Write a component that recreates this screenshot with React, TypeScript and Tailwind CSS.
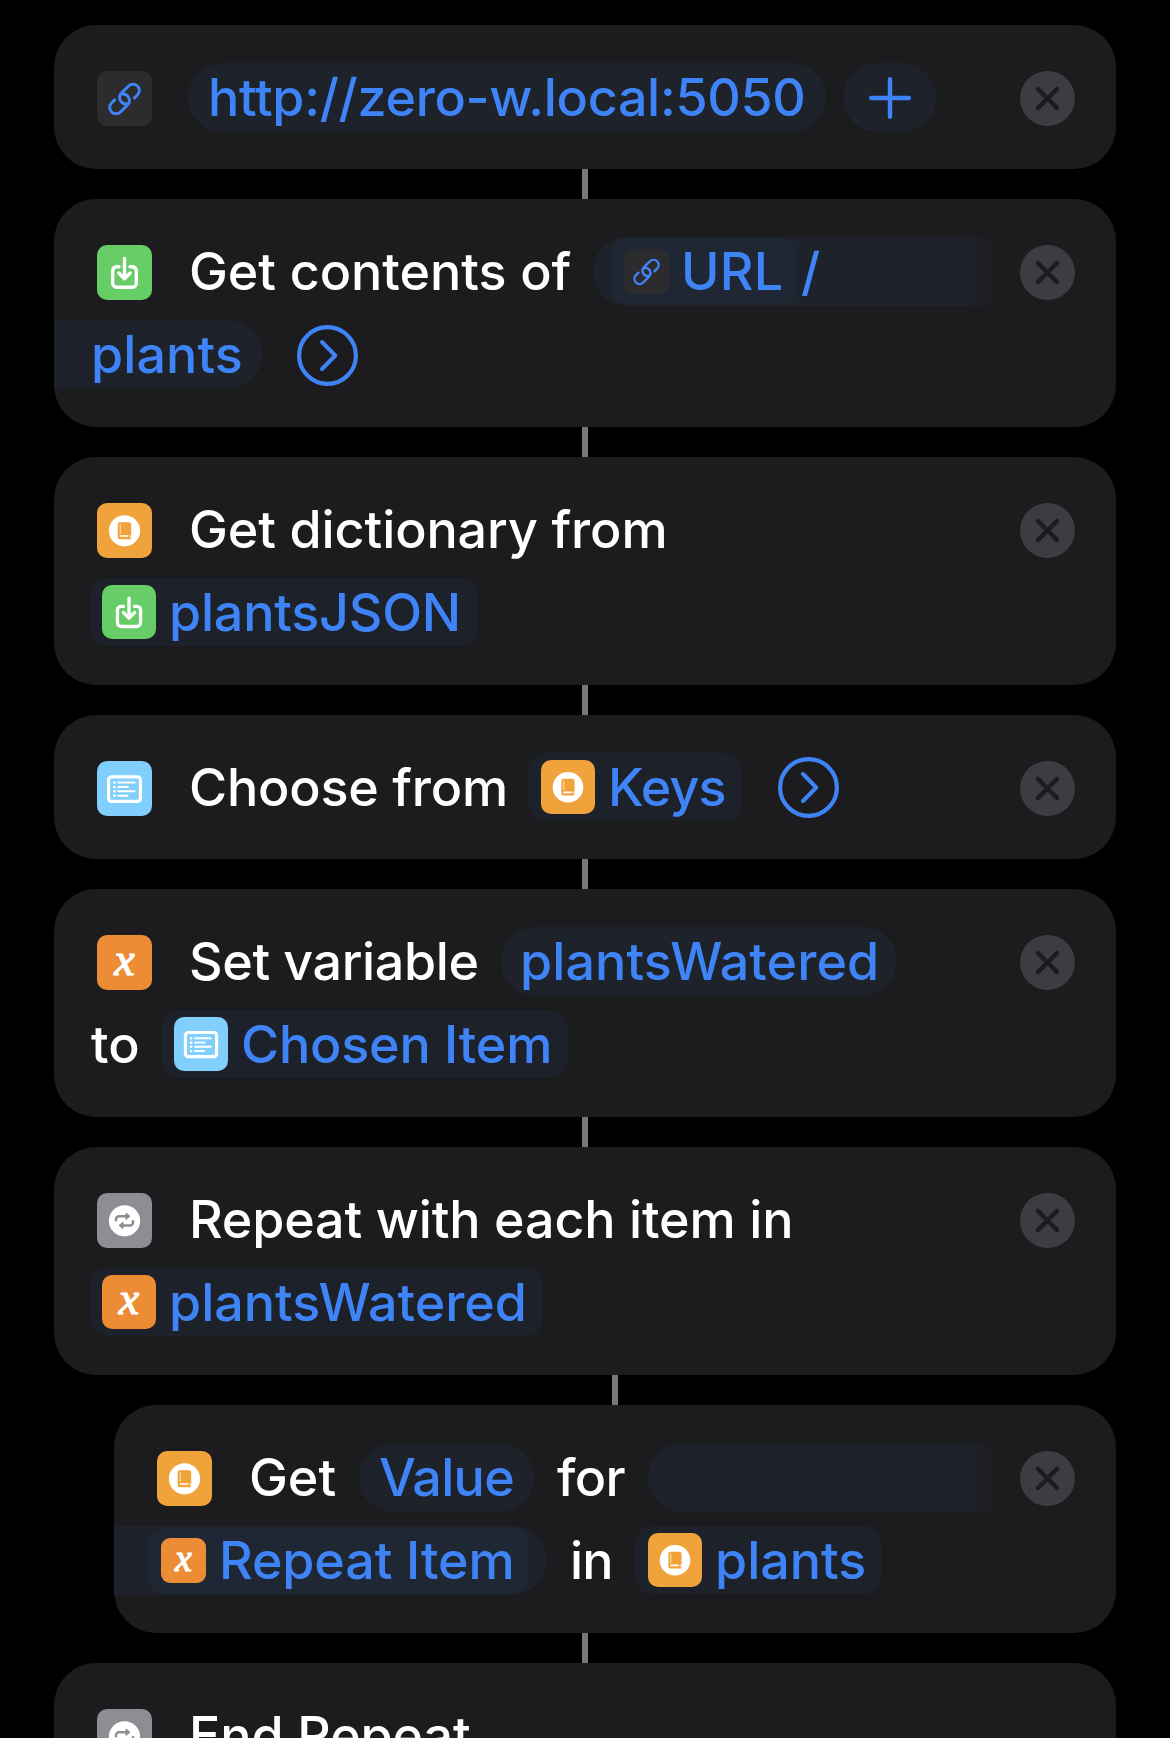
import type { ReactNode } from "react";

type IconProps = { className?: string };

function Tile({ className = "", children }: { className?: string; children: ReactNode }) {
  return <span className={`flex shrink-0 ${className}`}>{children}</span>;
}

function LinkIcon({ className = "size-[55px] rounded-[10px]" }: IconProps) {
  return (
    <Tile className={`bg-[#2c2c2e] ${className}`}>
      <svg viewBox="0 0 55 55" className="size-full" fill="none" stroke="#3f84f7" strokeWidth="2.9" strokeLinecap="butt">
        <g transform="translate(27.5 28) rotate(-45)">
          <path d="M-6.5 -6.3H-12A6.3 6.3 0 0 0 -12 6.3H-2A6.3 6.3 0 0 0 1 -5.5" />
          <path d="M6.5 6.3H12A6.3 6.3 0 0 0 12 -6.3H2A6.3 6.3 0 0 0 -1 5.5" />
        </g>
      </svg>
    </Tile>
  );
}

function DownloadIcon({ className = "size-[55px]" }: IconProps) {
  return (
    <Tile className={`rounded-[10px] bg-[#67ce67] ${className}`}>
      <svg viewBox="0 0 55 55" className="size-full" fill="none" stroke="#fff" strokeWidth="3.4" strokeLinecap="round" strokeLinejoin="round">
        <path d="M22 21.7H19.5A4 4 0 0 0 15.7 25.7V38.3A4 4 0 0 0 19.7 42.3H35.3A4 4 0 0 0 39.3 38.3V25.7A4 4 0 0 0 35.5 21.7H33" />
        <path d="M27.5 13.5V33M21.8 28L27.5 33.7L33.2 28" />
      </svg>
    </Tile>
  );
}

function DictionaryIcon({ className = "size-[55px]" }: IconProps) {
  return (
    <Tile className={`rounded-[10px] bg-[#f0a33b] ${className}`}>
      <svg viewBox="0 0 55 55" className="size-full">
        <circle cx="27.5" cy="27.8" r="15.6" fill="#fff" />
        <path d="M23 19.2H32A2.3 2.3 0 0 1 34.2 21.5V33.5L33.4 34V35.2H34.2V36.2H23A2.3 2.3 0 0 1 20.7 33.9V21.5A2.3 2.3 0 0 1 23 19.2Z" fill="#f0a33b" />
        <path d="M23.2 20.8V30.6" stroke="#fff" strokeWidth="0.7" />
        <path d="M22.8 33H31.2M32.4 33H33.4" stroke="#fff" strokeWidth="1.7" />
      </svg>
    </Tile>
  );
}

function ListIcon({ className = "size-[55px]" }: IconProps) {
  return (
    <Tile className={`rounded-[10px] bg-[#80cffd] ${className}`}>
      <svg viewBox="0 0 55 55" className="size-full" fill="none" stroke="#fff" strokeLinecap="round">
        <rect x="11.6" y="15.8" width="31.8" height="24.6" rx="3" strokeWidth="3.2" />
        <path d="M21.3 21.6H37.5M21.3 26.1H31M21.3 30.3H37.5M21.3 34.7H30.5" strokeWidth="2" />
        <path d="M17.4 21.6h.1M17.4 26.1h.1M17.4 30.3h.1M17.4 34.7h.1" strokeWidth="2.7" />
      </svg>
    </Tile>
  );
}

function VariableIcon({ className = "size-[55px] text-[46px] rounded-[10px]" }: IconProps) {
  return (
    <Tile className={`items-center justify-center bg-[#ec8d36] font-['Liberation_Serif',serif] font-normal italic text-white [-webkit-text-stroke:1.2px_white] ${className}`}>
      <span className="-mt-[10%] leading-none">x</span>
    </Tile>
  );
}

function RepeatIcon() {
  return (
    <Tile className="size-[55px] rounded-[10px] bg-[#8e8d93]">
      <svg viewBox="0 0 55 55" className="size-full">
        <circle cx="27.5" cy="27.8" r="15.6" fill="#fff" />
        <g fill="none" stroke="#8e8d93" strokeWidth="2.5" strokeLinecap="round">
          <path d="M19 27.3V26.2A3 3 0 0 1 22 23.2H29.5" />
          <path d="M36 28.3V29.4A3 3 0 0 1 33 32.4H25.5" />
        </g>
        <g fill="#8e8d93" stroke="#8e8d93" strokeWidth="1" strokeLinejoin="round">
          <path d="M29 20.1L33 23.2L29 26.4Z" />
          <path d="M26 29.3L22 32.4L26 35.6Z" />
        </g>
      </svg>
    </Tile>
  );
}

function CloseButton() {
  return (
    <button type="button" aria-label="Remove action" className="mt-[46px] mr-[41px] ml-5 size-[55px] shrink-0">
      <svg viewBox="0 0 55 55" className="size-full">
        <circle cx="27.5" cy="27.5" r="27.5" fill="#3d3c41" />
        <path d="M18 18L37 37M37 18L18 37" stroke="#1c1c1e" strokeWidth="4.5" strokeLinecap="round" />
      </svg>
    </button>
  );
}

function DisclosureButton({ className = "" }: IconProps) {
  return (
    <button type="button" aria-label="Show more" className={`size-[61px] shrink-0 ${className}`}>
      <svg viewBox="0 0 61 61" className="size-full" fill="none" stroke="#3f84f7">
        <circle cx="30.5" cy="30.5" r="28.4" strokeWidth="4.2" />
        <path d="M25 17L38.3 30.5L25 44" strokeWidth="4" strokeLinecap="round" strokeLinejoin="round" />
      </svg>
    </button>
  );
}

/* A run of text with a fixed advance, so neighbouring tokens keep their place. */
function T({ className = "", children }: { className?: string; children: ReactNode }) {
  return <span className={`block shrink-0 pt-0.5 whitespace-nowrap ${className}`}>{children}</span>;
}

function Row({ children }: { children: ReactNode }) {
  return <div className="flex h-[68px] items-center">{children}</div>;
}

const pill = "flex h-[69px] shrink-0 items-center rounded-full bg-[#1e222a] text-[#3f84f7]";
const openPill =
  "flex h-[69px] grow items-center rounded-l-full bg-linear-to-r from-[#1e222a] from-[calc(100%-36px)] to-[#1c1c1e] text-[#3f84f7]";
const token = "flex h-[68px] shrink-0 items-center rounded-[17px] bg-[#1d2129] text-[#3f84f7]";
const innerToken = "flex h-[65px] shrink-0 items-center rounded-[14px] bg-[#1e2733] text-[#3f84f7]";

function Card({ tall = false, className = "", children }: { tall?: boolean; className?: string; children: ReactNode }) {
  return (
    <section className={`flex shrink-0 items-start overflow-hidden rounded-[42px] bg-[#1c1c1e] ${tall ? "h-[228px]" : "h-[144px]"} ${className}`}>
      <div className="flex min-w-0 grow flex-col gap-[15px] pt-[38px]">{children}</div>
      <CloseButton />
    </section>
  );
}

function Connector({ className = "" }: IconProps) {
  return <div className={`h-[30px] w-1.5 shrink-0 self-center bg-[#76777d] ${className}`} />;
}

function Lead({ children }: { children: ReactNode }) {
  return <span className="mt-[3px] mr-9 ml-[43px] shrink-0">{children}</span>;
}

export default function App() {
  return (
    <main className="flex h-[1738px] w-[1170px] flex-col overflow-hidden bg-black px-[54px] pt-[25px] font-['Inter',sans-serif] text-[52px] leading-[66px] font-medium text-white">
      <Card>
        <Row>
          <Lead><LinkIcon /></Lead>
          <span className={`${pill} w-[638px] pl-5`}>
            <T className="tracking-[-0.3px]">http://zero-w.local:5050</T>
          </span>
          <button type="button" aria-label="Add URL" className={`${pill} ml-[17px] w-[93px] justify-center`}>
            <svg viewBox="0 0 42 42" className="mt-px size-[42px]" fill="none" stroke="#3f84f7" strokeWidth="4.4" strokeLinecap="round">
              <path d="M21 2.2V39.8M2.2 21H39.8" />
            </svg>
          </button>
        </Row>
      </Card>
      <Connector />

      <Card tall>
        <Row>
          <Lead><DownloadIcon /></Lead>
          <T className="w-[405px] pl-px tracking-[-0.05px]">Get contents of</T>
          <span className={openPill}>
            <span className={`${innerToken} ml-[19px] w-[185px] pl-3`}>
              <LinkIcon className="size-[45px] rounded-[9px]" />
              <T className="ml-3 tracking-[0.3px]">URL</T>
            </span>
            <T className="ml-1">/</T>
          </span>
        </Row>
        <Row>
          <span className={`${pill} w-[208px] rounded-l-none pl-9`}>
            <T className="pl-px tracking-[0.1px]">plants</T>
          </span>
          <DisclosureButton className="mt-[3px] ml-[35px]" />
        </Row>
      </Card>
      <Connector />

      <Card tall>
        <Row>
          <Lead><DictionaryIcon /></Lead>
          <T className="pl-px tracking-[-0.1px]">Get dictionary from</T>
        </Row>
        <Row>
          <span className={`${token} ml-9 w-[388px] pl-3`}>
            <DownloadIcon className="size-[54px]" />
            <T className="ml-[13px] tracking-[-0.2px]">plantsJSON</T>
          </span>
        </Row>
      </Card>
      <Connector />

      <Card>
        <Row>
          <Lead><ListIcon /></Lead>
          <T className="w-[340px] pl-px tracking-[-0.2px]">Choose from</T>
          <span className={`${token} w-[214px] pl-[13px]`}>
            <DictionaryIcon className="size-[54px]" />
            <T className="ml-[13px] tracking-[-0.9px]">Keys</T>
          </span>
          <DisclosureButton className="mt-px ml-9" />
        </Row>
      </Card>
      <Connector />

      <Card tall>
        <Row>
          <Lead><VariableIcon /></Lead>
          <T className="w-[313px] pl-px tracking-[-0.35px]">Set variable</T>
          <span className={`${pill} w-[396px] pl-[19px]`}>
            <T className="tracking-[0.1px]">plantsWatered</T>
          </span>
        </Row>
        <Row>
          <T className="ml-9 w-[71px] pl-px tracking-[0px]">to</T>
          <span className={`${token} w-[407px] pl-[13px]`}>
            <ListIcon className="size-[54px]" />
            <T className="ml-[13px] tracking-[-0.2px]">Chosen Item</T>
          </span>
        </Row>
      </Card>
      <Connector />

      <Card tall>
        <Row>
          <Lead><RepeatIcon /></Lead>
          <T className="pl-px tracking-[-0.15px]">Repeat with each item in</T>
        </Row>
        <Row>
          <span className={`${token} ml-9 w-[453px] pl-3`}>
            <VariableIcon className="size-[54px] rounded-[10px] text-[46px]" />
            <T className="ml-[13px] tracking-[0px]">plantsWatered</T>
          </span>
        </Row>
      </Card>
      <Connector className="translate-x-[30px]" />

      <Card tall className="ml-[60px]">
        <Row>
          <Lead><DictionaryIcon /></Lead>
          <T className="w-[111px] pl-px tracking-[0px]">Get</T>
          <span className={`${pill} w-[175px] pl-5`}>
            <T className="tracking-[-0.7px]">Value</T>
          </span>
          <T className="w-[114px] pl-[23px] tracking-[-0.6px]">for</T>
          <span className={openPill} />
        </Row>
        <Row>
          <span className={`${pill} w-[433px] rounded-l-none`}>
            <span className={`${innerToken} ml-[35px] w-[379px] pl-3`}>
              <VariableIcon className="size-[45px] rounded-[9px] text-[38px]" />
              <T className="ml-[13px] tracking-[-0.1px]">Repeat Item</T>
            </span>
          </span>
          <T className="w-[88px] pl-[23px] tracking-[-0.9px]">in</T>
          <span className={`${token} w-[246px] pl-[13px]`}>
            <DictionaryIcon className="size-[54px]" />
            <T className="ml-[13px] tracking-[0px]">plants</T>
          </span>
        </Row>
      </Card>
      <Connector />

      <section className="flex h-[144px] shrink-0 items-start rounded-[42px] bg-[#1c1c1e] pt-[38px]">
        <Row>
          <Lead><RepeatIcon /></Lead>
          <T className="pl-px tracking-[-0.1px]">End Repeat</T>
        </Row>
      </section>
    </main>
  );
}
